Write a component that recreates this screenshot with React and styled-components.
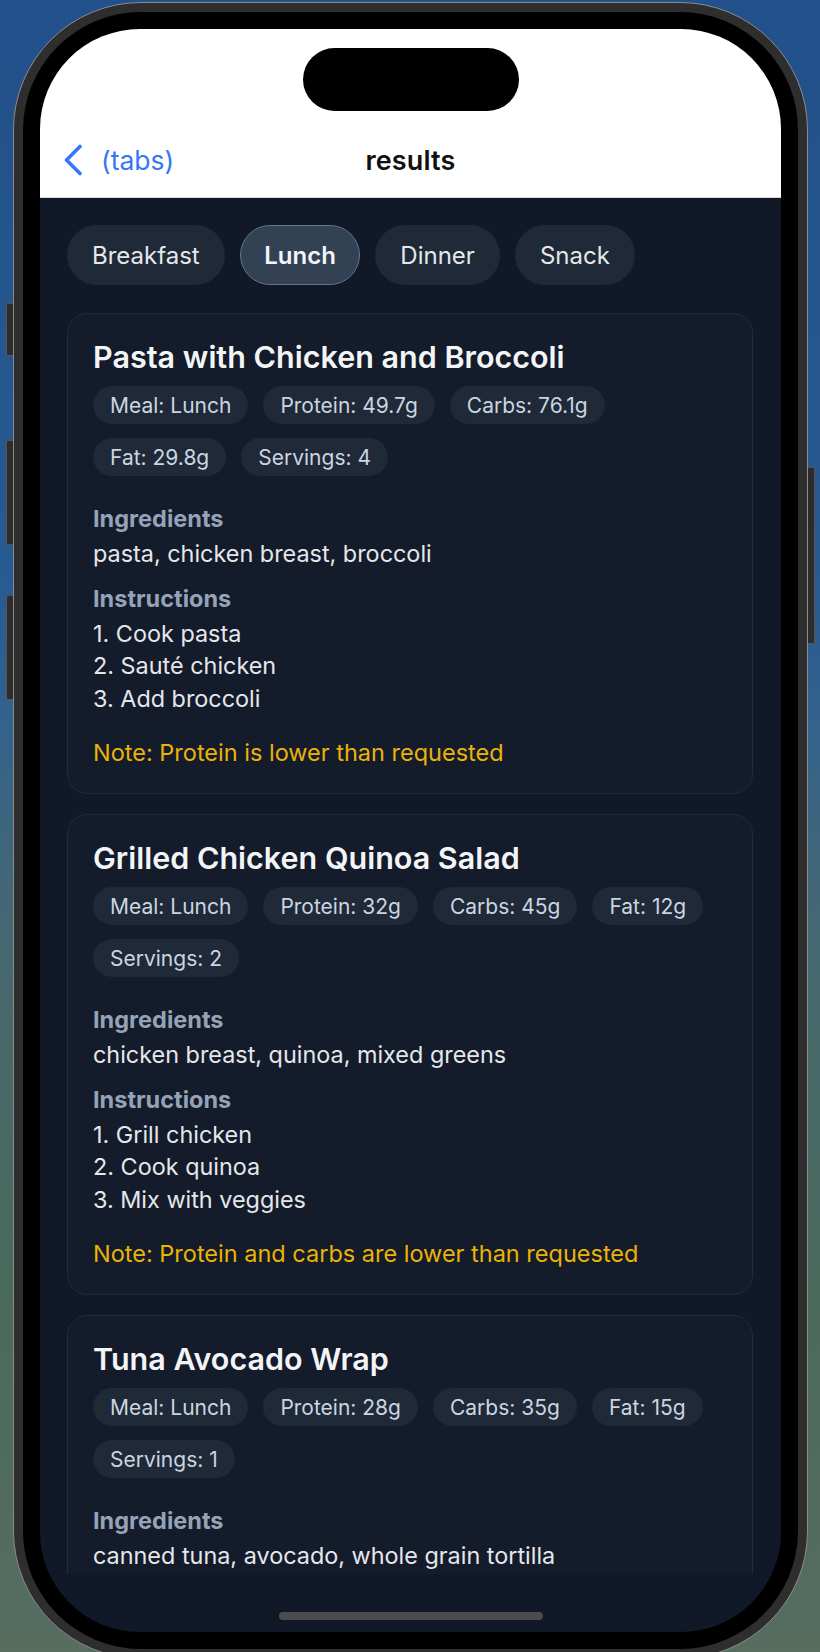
import React from "react";
import styled, { createGlobalStyle } from "styled-components";

const GlobalStyle = createGlobalStyle`
  html, body { margin: 0; padding: 0; }
  body { font-family: "Inter", "Noto Sans", sans-serif; }
  * { box-sizing: border-box; }
`;

const Stage = styled.div`
  width: 820px;
  height: 1652px;
  overflow: hidden;
  padding: 2px 0 0 13px;
  background: linear-gradient(
    180deg,
    #22508a 0%,
    #285b91 36%,
    #33628c 44%,
    #41667a 52%,
    #48696a 62%,
    #4a6a5c 78%,
    #566d60 100%
  );
`;

const Phone = styled.div`
  position: relative;
  width: 795px;
  height: 1657px;
  border-radius: 128px;
  background: #2e2e2e;
  border: 1px solid #8b8b8b;
  padding: 9px;
  display: flex;
`;

const SideButton = styled.div`
  position: absolute;
  width: 7px;
  background: #2c2c2c;
  border: 1px solid #555;
  ${(p) => (p.$side === "left" ? "left: -8px; border-right: none; border-radius: 2px 0 0 2px;" : "right: -8px; border-left: none; border-radius: 0 2px 2px 0;")}
  top: ${(p) => p.$top}px;
  height: ${(p) => p.$h}px;
`;

const Bezel = styled.div`
  flex: 1;
  border-radius: 118px;
  background: #000;
  padding: 17px;
  display: flex;
`;

const Screen = styled.div`
  flex: 1;
  border-radius: 100px;
  overflow: hidden;
  background: #111827;
  display: flex;
  flex-direction: column;
`;

const Header = styled.header`
  position: relative;
  flex: 0 0 168px;
  background: #ffffff;
  padding: 100px 0 6px;
  display: flex;
  flex-direction: column;
  justify-content: flex-end;
  border-bottom: 1px solid #d8d8dc;
`;

const Island = styled.div`
  position: absolute;
  top: 19px;
  left: 50%;
  transform: translateX(-50%);
  width: 216px;
  height: 63px;
  border-radius: 32px;
  background: #000;
`;

const NavBar = styled.div`
  height: 62px;
  display: grid;
  grid-template-columns: 1fr auto 1fr;
  align-items: center;
`;

const BackButton = styled.div`
  display: flex;
  align-items: center;
  gap: 18px;
  padding-left: 23px;
  color: #3478f6;
  font-size: 26.5px;
  font-weight: 400;
`;

const Title = styled.div`
  font-size: 27px;
  font-weight: 600;
  color: #111;
  letter-spacing: 0.15px;
`;

const Scroll = styled.main`
  flex: 0 0 1376px;
  overflow: hidden;
  padding: 27px 28px 0 27px;
  display: flex;
  flex-direction: column;
`;

const Tabs = styled.nav`
  display: flex;
  gap: 15px;
  margin-bottom: 28px;
`;

const Tab = styled.div`
  height: 60px;
  border-radius: 30px;
  display: flex;
  align-items: center;
  font-size: 24px;
  padding: ${(p) => (p.$active ? "0 23.5px" : "0 25px")};
  background: ${(p) => (p.$active ? "#334155" : "#1f2937")};
  border: ${(p) => (p.$active ? "1.5px solid #64748b" : "none")};
  color: ${(p) => (p.$active ? "#f1f5f9" : "#e5e7eb")};
  font-weight: ${(p) => (p.$active ? 600 : 400)};
`;

const Cards = styled.div`
  display: flex;
  flex-direction: column;
  gap: 20px;
`;

const Card = styled.section`
  background: #141b2a;
  border: 1px solid #222b3b;
  border-radius: 20px;
  padding: 25px 25px 24px;
  display: flex;
  flex-direction: column;
`;

const CardTitle = styled.h2`
  margin: 0 0 11px;
  font-size: 30.5px;
  line-height: 36px;
  font-weight: 600;
  color: #f3f4f6;
`;

const Chips = styled.div`
  display: flex;
  flex-wrap: wrap;
  gap: 14px 15px;
  margin-bottom: 29px;
`;

const Chip = styled.span`
  height: 38px;
  padding: 0 17px;
  border-radius: 19px;
  background: #1f2937;
  color: #cbd5e1;
  font-size: 21px;
  display: flex;
  align-items: center;
`;

const SectionLabel = styled.h3`
  margin: ${(p) => (p.$first ? "0" : "14px")} 0 6px;
  font-size: 23.5px;
  line-height: 27px;
  font-weight: 700;
  color: #94a3b8;
`;

const BodyText = styled.p`
  margin: 0;
  font-size: 23.4px;
  line-height: 32.5px;
  color: #e5e7eb;
`;

const Note = styled.p`
  margin: 22px 0 0;
  font-size: 23.5px;
  line-height: 32px;
  color: #eab308;
`;

const BottomArea = styled.div`
  flex: 1;
  display: flex;
  justify-content: center;
  padding-top: 38px;
`;

const HomeIndicator = styled.div`
  width: 264px;
  height: 8px;
  border-radius: 4px;
  background: #4c4c4e;
`;

const Chevron = () => (
  <svg width="20" height="32" viewBox="0 0 20 32" fill="none">
    <polyline
      points="17,2.5 3.5,16 17,29.5"
      stroke="#3478f6"
      strokeWidth="3.6"
      strokeLinecap="round"
      strokeLinejoin="round"
    />
  </svg>
);

const recipes = [
  {
    title: "Pasta with Chicken and Broccoli",
    chips: ["Meal: Lunch", "Protein: 49.7g", "Carbs: 76.1g", "Fat: 29.8g", "Servings: 4"],
    ingredients: "pasta, chicken breast, broccoli",
    steps: ["1. Cook pasta", "2. Sauté chicken", "3. Add broccoli"],
    note: "Note: Protein is lower than requested",
  },
  {
    title: "Grilled Chicken Quinoa Salad",
    chips: ["Meal: Lunch", "Protein: 32g", "Carbs: 45g", "Fat: 12g", "Servings: 2"],
    ingredients: "chicken breast, quinoa, mixed greens",
    steps: ["1. Grill chicken", "2. Cook quinoa", "3. Mix with veggies"],
    note: "Note: Protein and carbs are lower than requested",
  },
  {
    title: "Tuna Avocado Wrap",
    chips: ["Meal: Lunch", "Protein: 28g", "Carbs: 35g", "Fat: 15g", "Servings: 1"],
    ingredients: "canned tuna, avocado, whole grain tortilla",
    steps: ["1. Mash avocado", "2. Mix with tuna", "3. Wrap in tortilla"],
    note: "Note: Protein and carbs are lower than requested",
  },
];

const tabs = ["Breakfast", "Lunch", "Dinner", "Snack"];

export default function App() {
  return (
    <>
      <GlobalStyle />
      <Stage>
        <Phone>
          <SideButton $side="left" $top={300} $h={53} />
          <SideButton $side="left" $top={437} $h={105} />
          <SideButton $side="left" $top={592} $h={105} />
          <SideButton $side="right" $top={464} $h={177} />
          <Bezel>
            <Screen>
              <Header>
                <Island />
                <NavBar>
                  <BackButton>
                    <Chevron />
                    <span>(tabs)</span>
                  </BackButton>
                  <Title>results</Title>
                  <div />
                </NavBar>
              </Header>
              <Scroll>
                <Tabs>
                  {tabs.map((t) => (
                    <Tab key={t} $active={t === "Lunch"}>
                      {t}
                    </Tab>
                  ))}
                </Tabs>
                <Cards>
                  {recipes.map((r) => (
                    <Card key={r.title}>
                      <CardTitle>{r.title}</CardTitle>
                      <Chips>
                        {r.chips.map((c) => (
                          <Chip key={c}>{c}</Chip>
                        ))}
                      </Chips>
                      <SectionLabel $first>Ingredients</SectionLabel>
                      <BodyText>{r.ingredients}</BodyText>
                      <SectionLabel>Instructions</SectionLabel>
                      {r.steps.map((s) => (
                        <BodyText key={s}>{s}</BodyText>
                      ))}
                      <Note>{r.note}</Note>
                    </Card>
                  ))}
                </Cards>
              </Scroll>
              <BottomArea>
                <HomeIndicator />
              </BottomArea>
            </Screen>
          </Bezel>
        </Phone>
      </Stage>
    </>
  );
}
